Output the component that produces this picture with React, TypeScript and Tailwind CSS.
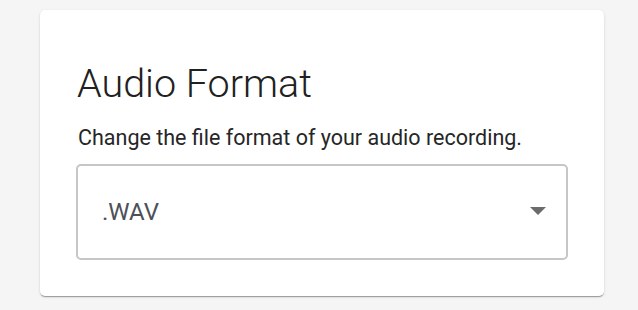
export default function App() {
  return (
    <div className="min-h-screen w-full bg-[#f5f5f5] pt-[10px] pl-[40px] font-['Roboto',sans-serif]">
      <div className="w-[564px] rounded-[5px] bg-white px-[36px] pt-[50px] pb-[36px] shadow-[0_2px_1px_-1px_rgba(0,0,0,0.2),0_1px_1px_0_rgba(0,0,0,0.14),0_1px_3px_0_rgba(0,0,0,0.12)]">
        <h2 className="pl-[1px] text-[39.5px] font-light leading-[48px] text-[#212121]">Audio Format</h2>
        <p className="mt-[16px] pl-[2px] text-[21.5px] leading-[28px] text-[#262626]">
          Change the file format of your audio recording.
        </p>
        <div className="mt-[12px] flex h-[96px] items-center justify-between rounded-[5px] border-2 border-[#c6c6c6] pl-[24px] pr-[20px]">
          <span className="text-[24px] leading-[28px] text-[#4d5058]">.WAV</span>
          <svg width="16" height="8" viewBox="0 0 16 8" className="mt-[-2px]">
            <path d="M0 0 L16 0 L8 8 Z" fill="#6b6b6b" />
          </svg>
        </div>
      </div>
    </div>
  );
}
